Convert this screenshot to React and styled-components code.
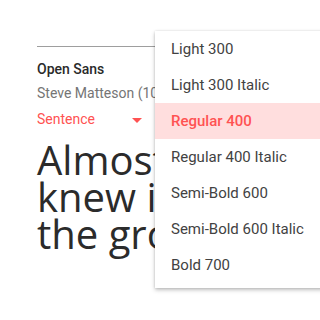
import styled, { createGlobalStyle } from 'styled-components';

const Global = createGlobalStyle`
    html, body {
        margin: 0;
        padding: 0;
        background: #ffffff;
        overflow: hidden;
    }
    body {
        width: 320px;
        height: 320px;
        font-family: 'Roboto', 'Liberation Sans', sans-serif;
    }
`;

const estilos = [
    'Light 300',
    'Light 300 Italic',
    'Regular 400',
    'Regular 400 Italic',
    'Semi-Bold 600',
    'Semi-Bold 600 Italic',
    'Bold 700',
];

export default function App(){
    return(
        <>
            <Global />
            <Page>
                <Card>
                    <FontName>Open Sans</FontName>
                    <Author>Steve Matteson (10 styles)</Author>
                    <Picker>
                        <span>Sentence</span>
                        <Arrow />
                    </Picker>
                    <Preview>
                        Almost before we knew it, we had left the ground.
                    </Preview>
                </Card>

                <Menu>
                    {estilos.map((e, i) => (
                        <MenuItem key={e} selected={i === 2}>{e}</MenuItem>
                    ))}
                </Menu>
            </Page>
        </>
    );
}

const Page = styled.div`
    position: relative;
    width: 320px;
    height: 320px;
    padding: 46px 0 0 37px;
    box-sizing: border-box;
    overflow: hidden;
`;

const Card = styled.div`
    width: 400px;
    border-top: 1px solid #9e9e9e;
    display: flex;
    flex-direction: column;
`;

const FontName = styled.div`
    margin-top: 13px;
    font-size: 14px;
    font-weight: 500;
    line-height: 18px;
    color: #2a2a2a;
`;

const Author = styled.div`
    margin-top: 6px;
    font-size: 14px;
    line-height: 18px;
    color: #757575;
    white-space: nowrap;
`;

const Picker = styled.div`
    margin-top: 8px;
    width: 104px;
    display: flex;
    align-items: center;
    justify-content: space-between;
    font-size: 14px;
    line-height: 18px;
    color: #ff5252;
`;

const Arrow = styled.div`
    width: 0;
    height: 0;
    border-left: 5px solid transparent;
    border-right: 5px solid transparent;
    border-top: 5px solid #ff5252;
    margin-top: 2px;
    margin-right: -1px;
`;

const Preview = styled.div`
    margin-top: 13px;
    font-family: 'Open Sans', sans-serif;
    font-size: 40px;
    line-height: 37px;
    color: #2b2b2b;
    width: 390px;
`;

const Menu = styled.div`
    position: absolute;
    top: 31px;
    left: 155px;
    width: 180px;
    padding-bottom: 5px;
    background: #ffffff;
    box-shadow: 0 2px 4px rgba(0, 0, 0, 0.25), 0 0 2px rgba(0, 0, 0, 0.12);
`;

const MenuItem = styled.div`
    height: 36px;
    display: flex;
    align-items: center;
    padding-left: 16px;
    font-size: 15px;
    color: ${p => p.selected ? '#ff5252' : '#424242'};
    font-weight: ${p => p.selected ? 500 : 400};
    background: ${p => p.selected ? '#ffdede' : 'transparent'};
`;
